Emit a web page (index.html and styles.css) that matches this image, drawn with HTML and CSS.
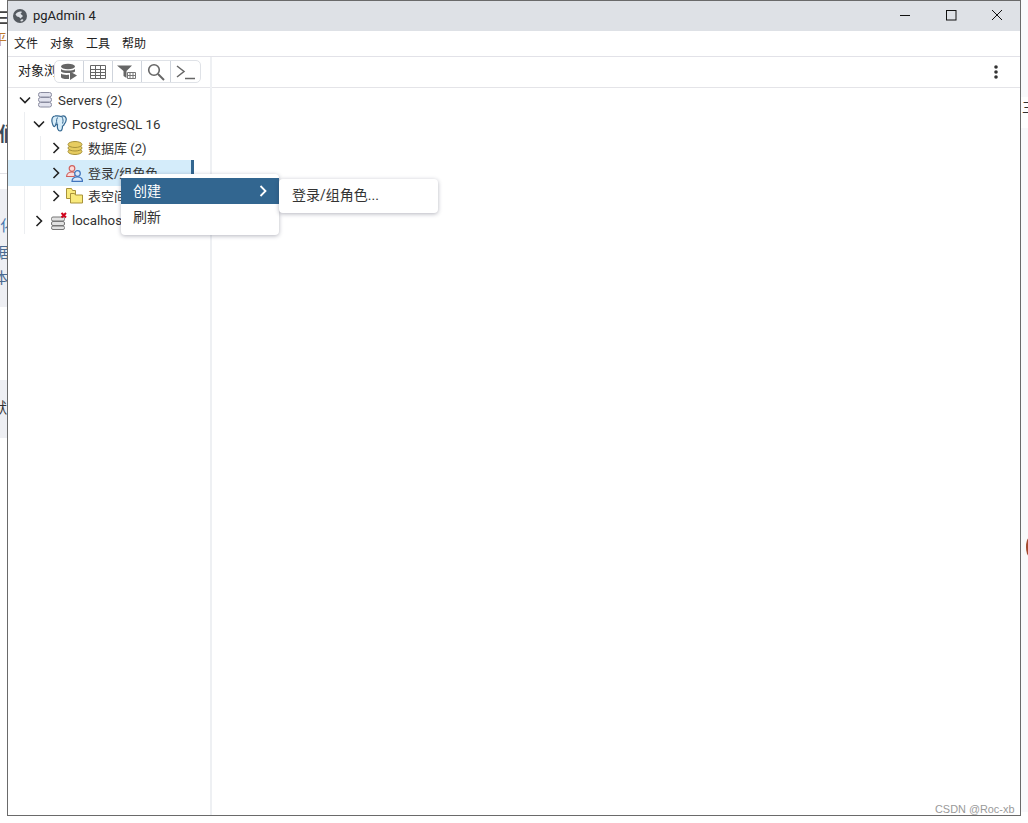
FILE: index.html
```html
<!DOCTYPE html>
<html lang="zh">
<head>
<meta charset="utf-8">
<title>pgAdmin 4</title>
<link rel="stylesheet" href="styles.css">
</head>
<body>
<div class="backdrop">
  <div class="bd bd-rule1"></div>
  <div class="bd bd-panel1"></div>
  <div class="bd bd-panel2"></div>
  <div class="bd bd-rstrip"></div>
  <div class="bd bd-rpanel"></div>
  <div class="bd bd-blob"></div>
  <div class="bd-text bd-menu">三</div>
  <div class="bd-text bd-t1">平</div>
  <div class="bd-text bd-t2">们</div>
  <div class="bd-text bd-t3">化</div>
  <div class="bd-text bd-t4">据</div>
  <div class="bd-text bd-t5">本</div>
  <div class="bd-text bd-t6">默</div>
  <div class="bd-text bd-t7">三</div>
</div>

<div class="window">
  <header class="titlebar">
    <svg class="app-icon" viewBox="0 0 14 14" width="14" height="14"><circle cx="7" cy="7" r="7" fill="#555a60"/><path d="M2.500 5.500C4.500 2.500 7.500 2 9 3L7.500 4.800 10 7 7.500 9.500 6 8 4 7.500zM7 12l2-2 1.500 1L9 12.500z" fill="#dee1e6"/></svg>
    <span class="app-title">pgAdmin 4</span>
    <div class="win-controls">
      <svg class="win-btn" viewBox="0 0 46 30" width="46" height="30"><path d="M18 14.500h10" stroke="#111" fill="none"/></svg>
      <svg class="win-btn" viewBox="0 0 46 30" width="46" height="30"><rect x="18.500" y="9.500" width="9.500" height="9.500" stroke="#111" fill="none"/></svg>
      <svg class="win-btn" viewBox="0 0 46 30" width="46" height="30"><path d="M18 9l10 10M28 9L18 19" stroke="#111" fill="none"/></svg>
    </div>
  </header>

  <nav class="menubar">
    <span>文件</span><span>对象</span><span>工具</span><span>帮助</span>
  </nav>

  <div class="main">
    <aside class="browser">
      <div class="browser-head">
        <span class="browser-title">对象浏览器</span>
        <div class="tools">
          <button class="tool"><svg viewBox="0 0 18 18" width="18" height="18"><ellipse cx="8" cy="3.500" rx="7" ry="2.800" fill="#666"/><path d="M1 6c2 2 12 2 14 0v2.500c-2 2-12 2-14 0zM1 10.500c1.500 1.300 5 1.600 8 1.300V16c-4 .4-8-.6-8-2z" fill="#666"/><path d="M10 8.500l7 4-7 4.500z" fill="#666"/></svg></button>
          <button class="tool"><svg viewBox="0 0 18 16" width="18" height="16"><path d="M1.500 1.500h15v13h-15zM1.500 5.500h15M1.500 8.500h15M1.500 11.500h15M6.500 1.500v13M11.500 1.500v13" fill="none" stroke="#666"/></svg></button>
          <button class="tool"><svg viewBox="0 0 20 16" width="20" height="16"><path d="M0 1.500h15L9.500 7v7l-3-2V7z" fill="#666"/><path d="M10.500 8.500h8v6h-8zM10.500 11.500h8M13 8.500v6M16 8.500v6" fill="#fff" stroke="#777"/></svg></button>
          <button class="tool"><svg viewBox="0 0 18 18" width="18" height="18"><circle cx="7" cy="7" r="5.300" fill="none" stroke="#666" stroke-width="1.600"/><path d="M11 11l6 6" stroke="#666" stroke-width="2"/></svg></button>
          <button class="tool"><svg viewBox="0 0 20 16" width="20" height="16"><path d="M1 2l7 5.500L1 13" fill="none" stroke="#666" stroke-width="1.500"/><path d="M9 14.500h10" stroke="#666" stroke-width="1.500"/></svg></button>
        </div>
      </div>

      <div class="tree">
        <div class="guide guide-a"></div>
        <div class="guide guide-b"></div>

        <div class="row lvl0">
          <svg class="chev" viewBox="0 0 12 12" width="12" height="12"><path d="M1 3.500l5 5 5-5" fill="none" stroke="#222" stroke-width="1.600"/></svg>
          <svg class="node-icon" viewBox="0 0 16 16" width="16" height="16"><g fill="#e2e3ee" stroke="#8a8ca0"><rect x="1.500" y=".5" width="13" height="4.500" rx="2"/><rect x="1.500" y="5.500" width="13" height="4.500" rx="2"/><rect x="1.500" y="10.500" width="13" height="4.500" rx="2"/></g></svg>
          <span>Servers (2)</span>
        </div>
        <div class="row lvl1">
          <svg class="chev" viewBox="0 0 12 12" width="12" height="12"><path d="M1 3.500l5 5 5-5" fill="none" stroke="#222" stroke-width="1.600"/></svg>
          <svg class="node-icon" viewBox="0 0 16 18" width="16" height="18"><path d="M4 1C1.500 1 .5 4 1 7c.4 2 1.500 5 2.500 4.500S5 9 5 9c.5 1 1 1 1.500 1-.5 3 .5 6 2.500 6s2.500-2 2.500-5c1.500 0 1.500-1.500 1.500-1.500S16 6 15 3c-.8-2-3-2.300-5-1.500C8 .5 6 .8 4 1z" fill="#d8edf9" stroke="#336791" stroke-width="1.200"/><path d="M6.500 2.500C5 5 5.500 7.500 6.500 10M11 2c1 2 1.500 4 .5 6.500" fill="none" stroke="#336791"/></svg>
          <span>PostgreSQL 16</span>
        </div>
        <div class="row lvl2">
          <svg class="chev" viewBox="0 0 12 12" width="12" height="12"><path d="M3.500 1l5 5-5 5" fill="none" stroke="#222" stroke-width="1.600"/></svg>
          <svg class="node-icon" viewBox="0 0 16 14" width="16" height="14"><g fill="#e7cc60" stroke="#a8923a"><ellipse cx="8" cy="10.500" rx="7" ry="3"/><ellipse cx="8" cy="7" rx="7" ry="3"/><ellipse cx="8" cy="3.500" rx="7" ry="3"/></g></svg>
          <span class="cjk">数据库 (2)</span>
        </div>
        <div class="row lvl2 selected">
          <svg class="chev" viewBox="0 0 12 12" width="12" height="12"><path d="M3.500 1l5 5-5 5" fill="none" stroke="#222" stroke-width="1.600"/></svg>
          <svg class="node-icon wide" viewBox="0 0 17 17" width="17" height="17"><g fill="#fbdcdc" stroke="#d0605c" stroke-width="1.200"><circle cx="6" cy="3.500" r="2.800"/><path d="M.6 11.500c0-3 2.500-4.500 5.400-4.500s4 1 4.500 2.500L8 11.500z"/></g><g fill="#dbe9fa" stroke="#3f74bd" stroke-width="1.200"><circle cx="11.500" cy="8.500" r="2.800"/><path d="M6 16.400c0-3 2.500-4.400 5.500-4.400s5 1.400 5 4.400z"/></g></svg>
          <span class="cjk">登录/组角色</span>
        </div>
        <div class="row lvl2">
          <svg class="chev" viewBox="0 0 12 12" width="12" height="12"><path d="M3.500 1l5 5-5 5" fill="none" stroke="#222" stroke-width="1.600"/></svg>
          <svg class="node-icon wide" viewBox="0 0 17 16" width="17" height="16"><g fill="#f9ea7c" stroke="#a8923a"><path d="M.5 .5h5l1 2h3v8h-9z"/><path d="M4.500 5.500h4l1 1.500h7v8h-12z"/></g></svg>
          <span class="cjk">表空间</span>
        </div>
        <div class="row lvl1 down">
          <svg class="chev" viewBox="0 0 12 12" width="12" height="12"><path d="M3.500 1l5 5-5 5" fill="none" stroke="#222" stroke-width="1.600"/></svg>
          <svg class="node-icon" viewBox="0 0 16 18" width="16" height="18"><g fill="#e2e2e2" stroke="#777"><rect x=".5" y="5" width="13" height="4" rx="1.500"/><rect x=".5" y="9.500" width="13" height="4" rx="1.500"/><rect x=".5" y="14" width="13" height="3.500" rx="1.500"/></g><path d="M10.500 1l4.500 4.500M15 1l-4.500 4.500" stroke="#d0021b" stroke-width="2"/></svg>
          <span>localhost</span>
        </div>
      </div>
    </aside>

    <section class="workspace">
      <div class="work-head">
        <svg viewBox="0 0 4 14" width="4" height="14"><circle cx="2" cy="2" r="1.800" fill="#333"/><circle cx="2" cy="7" r="1.800" fill="#333"/><circle cx="2" cy="12" r="1.800" fill="#333"/></svg>
      </div>
    </section>
  </div>

  <div class="ctx-menu">
    <div class="ctx-item active"><span>创建</span><svg viewBox="0 0 8 12" width="8" height="12"><path d="M1.500 1l5 5-5 5" fill="none" stroke="#fff" stroke-width="1.800"/></svg></div>
    <div class="ctx-item"><span>刷新</span></div>
  </div>
  <div class="ctx-menu sub">
    <div class="ctx-item"><span>登录/组角色...</span></div>
  </div>
</div>

<div class="watermark">CSDN @Roc-xb</div>
</body>
</html>
```
FILE: styles.css
```css
* { box-sizing: border-box; }
html, body { margin: 0; padding: 0; }
body {
  position: relative;
  width: 1028px;
  height: 823px;
  overflow: hidden;
  background: #fff;
  font-family: Roboto, "Noto Sans CJK SC", sans-serif;
  font-size: 13px;
  color: #222;
}

/* page behind the window */
.backdrop { position: absolute; inset: 0; overflow: hidden; }
.bd { position: absolute; }
.bd-rule1 { left: 0; top: 173px; width: 7px; height: 1px; background: #e2e2e6; }
.bd-panel1 { left: 0; top: 189px; width: 7px; height: 118px; background: #eeeff3; }
.bd-panel2 { left: 0; top: 380px; width: 7px; height: 58px; background: #eeeff3; }
.bd-rstrip { left: 1021px; top: 0; width: 7px; height: 812px; background: #f9f9fb; }
.bd-rpanel { left: 1021px; top: 97px; width: 7px; height: 31px; background: #fff; }
.bd-blob { left: 1026px; top: 538px; width: 6px; height: 18px; border-radius: 50%; background: #a4492f; }
.bd-text { position: absolute; line-height: 20px; font-size: 15px; white-space: nowrap; color: #333; }
.bd-menu { left: -5px; top: 8px; font-size: 15px; font-weight: 700; color: #444; }
.bd-t1 { left: -7px; top: 29px; color: #c07a30; font-size: 14px; }
.bd-t2 { left: -1px; top: 125px; font-weight: 700; font-size: 19px; color: #3a4a5a; }
.bd-t3 { left: 0; top: 216px; color: #4a7ab0; }
.bd-t4 { left: -6px; top: 243px; color: #4a6a90; }
.bd-t5 { left: -6px; top: 268px; color: #4a6a90; }
.bd-t6 { left: -8px; top: 398px; }
.bd-t7 { left: 1022px; top: 98px; font-size: 13px; }

/* window */
.window {
  position: relative;
  margin-left: 7px;
  width: 1014px;
  height: 816px;
  border: 1px solid #6a6a6a;
  background: #fff;
  display: flex;
  flex-direction: column;
}
.titlebar {
  height: 30px;
  background: #dee1e6;
  display: flex;
  align-items: center;
  padding-left: 5px;
  flex: none;
}
.app-icon { flex: none; margin-bottom: 1px; }
.app-title { margin-left: 6px; padding-bottom: 2px; font-size: 13px; color: #222; }
.win-controls { margin-left: auto; display: flex; }
.win-btn { display: block; }

.menubar {
  height: 26px;
  flex: none;
  display: flex;
  align-items: center;
  gap: 12px;
  padding-left: 6px;
  padding-bottom: 2px;
  font-size: 12px;
  color: #222;
  border-bottom: 1px solid #e2e2e8;
}

.main { flex: 1; display: flex; min-height: 0; }
.browser {
  width: 204px;
  flex: none;
  border-right: 2px solid #eef0f3;
  display: flex;
  flex-direction: column;
}
.browser-head {
  height: 31px;
  flex: none;
  display: flex;
  align-items: flex-start;
  padding-left: 10px;
  border-bottom: 1px solid #e4e4e8;
  overflow: hidden;
}
.browser-title {
  width: 36px;
  flex: none;
  overflow: hidden;
  white-space: nowrap;
  font-size: 13px;
  line-height: 28px;
}
.tools {
  display: flex;
  height: 23px;
  margin-top: 3px;
  flex: none;
  border: 1px solid #dfe2e7;
  border-radius: 5px;
  background: #fff;
}
.tool {
  width: 29px;
  padding: 0;
  border: 0;
  background: none;
  border-right: 1px solid #cfd4dc;
  display: flex;
  align-items: center;
  justify-content: center;
}
.tool:last-child { border-right: 0; }

.tree { position: relative; flex: 1; }
.guide { position: absolute; width: 1px; background: #eceef1; }
.guide-a { left: 16px; top: 24px; height: 122px; }
.guide-b { left: 32px; top: 48px; height: 74px; }
.row {
  position: relative;
  height: 24px;
  display: flex;
  align-items: center;
  white-space: nowrap;
  color: #333;
  font-size: 13.300px;
}
.row .chev { flex: none; margin-right: 6px; }
.row .node-icon { flex: none; margin-right: 5px; }
.row .cjk { padding-bottom: 2px; font-size: 13px; }
.lvl0 { padding-left: 11px; }
.lvl1 { padding-left: 25px; }
.lvl2 { padding-left: 42px; }
.lvl2 .chev { margin-right: 5px; }
.lvl2 .node-icon.wide { margin-left: -1px; margin-right: 5px; }
.down svg { margin-top: 1px; }
.selected {
  height: 26px;
  margin-bottom: -2px;
  width: 186px;
  background: #d4ecfa;
  border-right: 3px solid #326690;
}

.workspace { flex: 1; min-width: 0; }
.work-head {
  height: 31px;
  border-bottom: 1px solid #e4e4e8;
  display: flex;
  align-items: center;
  justify-content: flex-end;
  padding-right: 22px;
}

/* context menus */
.ctx-menu {
  position: absolute;
  left: 113px;
  top: 173px;
  width: 158px;
  height: 61px;
  padding: 4px 0;
  background: #fff;
  border-radius: 4px;
  box-shadow: 0 1px 4px rgba(40, 44, 70, .35);
  font-size: 14px;
  color: #333;
}
.ctx-menu.sub {
  left: 271px;
  top: 178px;
  height: 34px;
  padding: 3px 0 5px;
  width: 159px;
}
.ctx-item {
  height: 26px;
  padding: 0 12px;
  display: flex;
  align-items: center;
  justify-content: space-between;
}
.ctx-item span { padding-bottom: 2px; }
.ctx-item.active span { padding-bottom: 3px; }
.sub .ctx-item { padding-left: 13px; }
.ctx-item.active { background: #326690; color: #fff; }

.watermark {
  position: absolute;
  left: 935px;
  top: 802px;
  font-family: "Liberation Sans", sans-serif;
  font-size: 10.900px;
  line-height: 14px;
  color: #9a9a9a;
}
```
